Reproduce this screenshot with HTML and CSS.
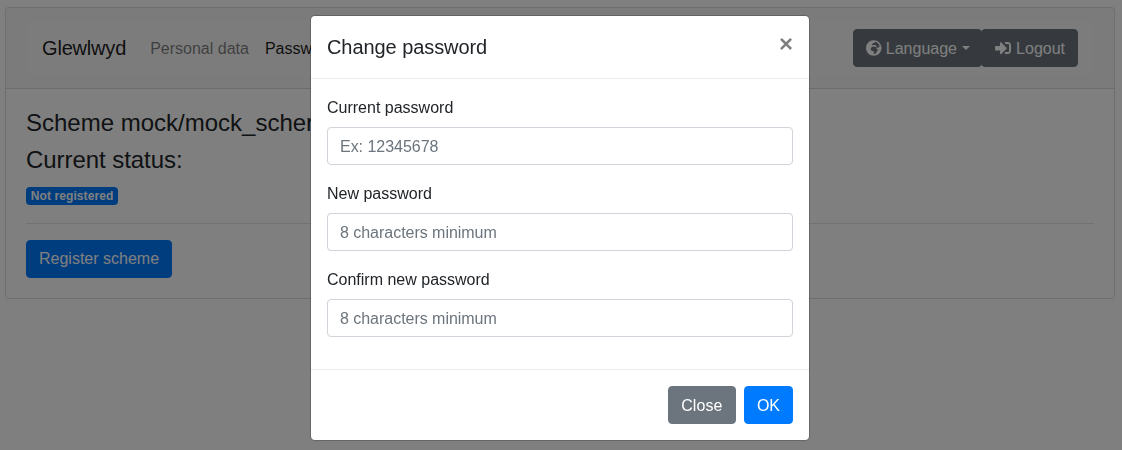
FILE: index.html
```html
<!DOCTYPE html>
<html lang="en">
<head>
<meta charset="utf-8">
<title>Glewlwyd</title>
<link rel="stylesheet" href="styles.css">
</head>
<body>
<div class="card">
  <div class="card-header">
    <nav class="navbar">
      <a class="brand">Glewlwyd</a>
      <ul class="nav">
        <li class="nav-link">Personal data</li>
        <li class="nav-link active">Passw</li>
      </ul>
      <div class="btn-group">
        <button type="button" class="btn btn-low btn-secondary dropdown-toggle"><svg class="icon-globe" viewBox="0 0 496 512"><path fill="currentColor" d="M248 8C111.03 8 0 119.03 0 256s111.03 248 248 248 248-111.03 248-248S384.97 8 248 8zm160 215.5v6.93c0 5.87-3.32 11.24-8.57 13.86l-15.39 7.7a15.485 15.485 0 0 1-15.53-.97l-18.21-12.14a15.52 15.52 0 0 0-13.5-1.81l-2.65.88c-9.7 3.23-13.66 14.79-7.99 23.3l13.24 19.86c2.87 4.31 7.71 6.9 12.89 6.9h8.21c8.56 0 15.5 6.94 15.5 15.5v11.34c0 3.35-1.09 6.62-3.1 9.3l-18.74 24.98c-1.42 1.9-2.39 4.1-2.83 6.43l-4.3 22.83c-.62 3.29-2.29 6.29-4.76 8.56a159.608 159.608 0 0 0-25 29.16l-13.03 19.55a27.756 27.756 0 0 1-23.09 12.36c-10.51 0-20.12-5.94-24.82-15.34a78.902 78.902 0 0 1-8.33-35.29V367.5c0-8.56-6.94-15.5-15.5-15.5h-25.88c-14.49 0-28.38-5.76-38.63-16a54.659 54.659 0 0 1-16-38.63v-14.06c0-17.19 8.1-33.38 21.85-43.7l27.58-20.69a54.663 54.663 0 0 1 32.78-10.93h.89c8.48 0 16.85 1.97 24.43 5.77l14.72 7.36c3.68 1.84 7.93 2.14 11.83.84l47.31-15.77c6.33-2.11 10.6-8.03 10.6-14.7 0-8.56-6.94-15.5-15.5-15.5h-10.09c-4.11 0-8.05-1.63-10.96-4.54l-6.92-6.92a15.493 15.493 0 0 0-10.96-4.54H199.5c-8.56 0-15.5-6.94-15.5-15.5v-4.4c0-7.11 4.84-13.31 11.74-15.04l14.45-3.61c3.74-.94 7-3.23 9.14-6.44l8.08-12.11c2.87-4.31 7.71-6.9 12.89-6.9h24.21c8.56 0 15.5-6.94 15.5-15.5v-21.7C359.23 71.63 422.86 131.02 441.93 208H423.5c-8.56 0-15.5 6.94-15.5 15.5z"/></svg> Language</button>
        <button type="button" class="btn btn-low btn-secondary"><svg class="icon-logout" viewBox="0 0 512 512"><path fill="currentColor" d="M416 448h-84c-6.6 0-12-5.4-12-12v-40c0-6.6 5.4-12 12-12h84c17.7 0 32-14.3 32-32V160c0-17.7-14.3-32-32-32h-84c-6.6 0-12-5.4-12-12V76c0-6.6 5.4-12 12-12h84c53 0 96 43 96 96v192c0 53-43 96-96 96zm-47-201L201 79c-15-15-41-4.5-41 17v96H24c-13.3 0-24 10.7-24 24v96c0 13.3 10.7 24 24 24h136v96c0 21.5 26 32 41 17l168-168c9.3-9.4 9.3-24.6 0-34z"/></svg> Logout</button>
      </div>
    </nav>
  </div>
  <div class="card-body">
    <h4>Scheme mock/mock_scher</h4>
    <h4 class="status-title">Current status:</h4>
    <div class="status"><span class="badge">Not registered</span></div>
    <hr>
    <button type="button" class="btn btn-primary">Register scheme</button>
  </div>
</div>

<div class="backdrop">
  <div class="modal" role="dialog">
    <div class="modal-header">
      <h5>Change password</h5>
      <button type="button" class="close" aria-label="Close">×</button>
    </div>
    <form class="modal-body">
      <div class="form-group">
        <label for="current">Current password</label>
        <input id="current" type="password" placeholder="Ex: 12345678">
      </div>
      <div class="form-group">
        <label for="new">New password</label>
        <input id="new" type="password" placeholder="8 characters minimum">
      </div>
      <div class="form-group">
        <label for="confirm">Confirm new password</label>
        <input id="confirm" type="password" placeholder="8 characters minimum">
      </div>
    </form>
    <div class="modal-footer">
      <button type="button" class="btn btn-low btn-secondary btn-close">Close</button>
      <button type="button" class="btn btn-low btn-primary">OK</button>
    </div>
  </div>
</div>
</body>
</html>
```
FILE: styles.css
```css
*, *::before, *::after { box-sizing: border-box; }
html { overflow: hidden; }
body {
  margin: 0;
  padding: 7px 7px 0 5px;
  font: 400 16px/1.5 "Liberation Sans", Arial, sans-serif;
  color: #212529;
  background: #fff;
}
h4, h5 { margin: 0; font-weight: 400; }
h4 { font-size: 24px; line-height: 1.2; margin-bottom: 8px; }
h5 { font-size: 20px; line-height: 1.5; letter-spacing: -.07px; }
hr { margin: 16px 0; border: 0; border-top: 1px solid rgba(0, 0, 0, .1); }

.card { border: 1px solid rgba(0, 0, 0, .125); border-radius: 4px; background: #fff; }
.card-header {
  padding: 12px 20px;
  background: rgba(0, 0, 0, .03);
  border-bottom: 1px solid rgba(0, 0, 0, .125);
}
.card-body { padding: 20px; }

.navbar { display: flex; align-items: center; padding: 8px 16px; background: #f8f9fa; }
.brand {
  padding: 5px 0;
  margin-right: 16px;
  font-size: 20px;
  letter-spacing: -.18px;
  color: rgba(0, 0, 0, .9);
}
.nav { display: flex; flex: 1; margin: 0; padding: 0; list-style: none; }
.nav-link { padding: 9px 8px 7px; color: rgba(0, 0, 0, .5); }
.nav-link.active { color: rgba(0, 0, 0, .9); }

.btn {
  padding: 6px 12px;
  border: 1px solid transparent;
  border-radius: 4px;
  font: inherit;
  color: #fff;
  white-space: nowrap;
}
.btn-low { padding: 7px 12px 5px; }
.btn-close { width: 68px; letter-spacing: .1px; }
.btn-primary { background: #007bff; border-color: #007bff; }
.btn-secondary { background: #6c757d; border-color: #6c757d; }
.btn-group { display: flex; }
.btn-group .btn + .btn { width: 97px; padding-right: 11px; margin-left: -1px; }
.dropdown-toggle { padding-right: 11px; }
.dropdown-toggle::after {
  content: "";
  display: inline-block;
  margin-left: 5px;
  vertical-align: .28em;
  border-top: .3em solid;
  border-right: .3em solid transparent;
  border-left: .3em solid transparent;
}
.icon-globe, .icon-logout { height: 16px; vertical-align: -2px; overflow: visible; }
.icon-globe { width: 15.5px; }
.icon-logout { width: 16px; margin-right: .7px; }

.status-title { letter-spacing: -.06px; }
.status { display: flex; align-items: center; height: 24px; padding-top: 2px; }
.badge {
  padding: 3px 4.8px;
  border-radius: 4px;
  font-size: 12px;
  font-weight: 700;
  line-height: 1;
  letter-spacing: .09px;
  color: #fff;
  background: #007bff;
}

.backdrop {
  position: fixed;
  inset: 0;
  display: flex;
  justify-content: center;
  align-items: flex-start;
  padding: 15px 2px 0 0;
  background: rgba(0, 0, 0, .5);
}
.modal {
  width: 500px;
  border: 1px solid rgba(0, 0, 0, .2);
  border-radius: 5px;
  background: #fff;
  background-clip: padding-box;
}
.modal-header {
  display: flex;
  justify-content: space-between;
  align-items: flex-start;
  padding: 16px;
  border-bottom: 1px solid #e9ecef;
}
.close {
  margin: -16px -16px -16px auto;
  padding: 16px;
  border: 0;
  font: 700 24px/1 "Liberation Sans", Arial, sans-serif;
  color: #000;
  background: none;
  text-shadow: 0 1px 0 #fff;
  opacity: .5;
}
.modal-body { padding: 16px; }
.form-group { margin-bottom: 16px; }
label { display: block; padding-top: 1px; margin-bottom: 7px; }
input {
  display: block;
  width: 100%;
  height: 38px;
  padding: 7px 12px 5px;
  border: 1px solid #ced4da;
  border-radius: 4px;
  font: inherit;
  background: #fff;
}
input::placeholder { color: #6c757d; opacity: 1; letter-spacing: -.03px; }
.modal-footer {
  display: flex;
  justify-content: flex-end;
  gap: 8px;
  padding: 16px;
  border-top: 1px solid #e9ecef;
}
```
